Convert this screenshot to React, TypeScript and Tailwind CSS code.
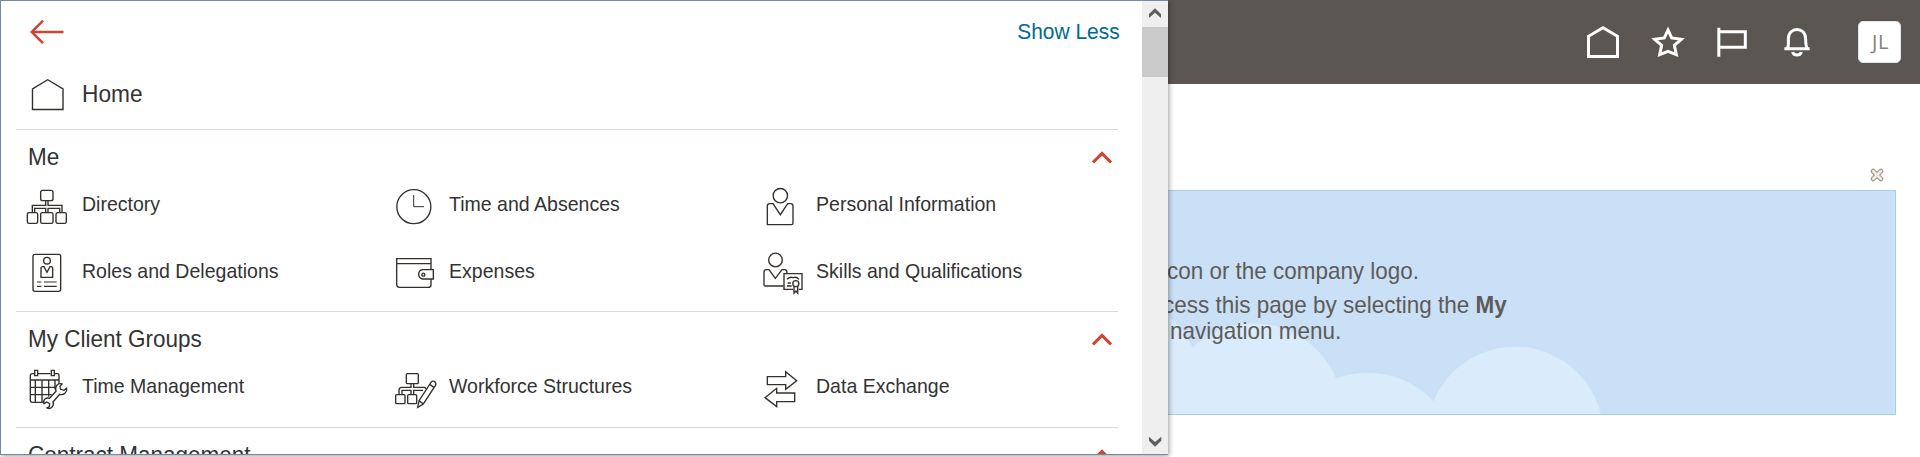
import type { ReactNode } from "react";

type IconProps = { x: number; y: number; tx: number; ty: number; children: ReactNode };

function MenuIcon({ x, y, tx, ty, children }: IconProps) {
  return (
    <svg
      className="h-[52px] w-[52px] shrink-0"
      viewBox={`${x} ${y} 52 52`}
      fill="none"
      stroke="#35302c"
    >
      <g transform={`translate(${tx} ${ty}) scale(0.33333)`} strokeWidth="4.1">
        {children}
      </g>
    </svg>
  );
}

const DirectoryIcon = () => (
  <MenuIcon x={20} y={178} tx={0} ty={0}>
    <rect x="122" y="571" width="37" height="31" rx="6" />
    <rect x="82" y="638" width="31" height="32" rx="5" />
    <rect x="122" y="638" width="37" height="32" rx="5" />
    <rect x="168" y="638" width="31" height="32" rx="5" />
    <path d="M137 602V616H97V638M144 602V616H186V638M104 638V625H137V638M144 638V625H179V638" />
  </MenuIcon>
);

const RolesIcon = () => (
  <MenuIcon x={20} y={245} tx={0} ty={230}>
    <rect x="99" y="73" width="83" height="111" rx="6" />
    <circle cx="141" cy="92" r="10" />
    <path d="M123 142V116Q123 110 129 110H132L141 127L150 110H153Q158 110 158 116V142Z" />
    <path d="M111 156H124M132 156H170M111 169H124M132 169H170" strokeWidth="3.5" />
  </MenuIcon>
);

const ClockIcon = () => (
  <MenuIcon x={387} y={178} tx={380} ty={170}>
    <circle cx="101.500" cy="110" r="51" />
    <path d="M101 75V110H132" strokeWidth="3" />
  </MenuIcon>
);

const WalletIcon = () => (
  <MenuIcon x={387} y={245} tx={380} ty={170}>
    <path d="M153 299V266H50V343Q50 352 59 352H145Q153 352 153 344V327M50 281H153" />
    <path d="M160 299H128Q116 301 116 313Q116 325 128 327H160Z" />
    <circle cx="130" cy="314" r="4.500" />
  </MenuIcon>
);

const PersonIcon = () => (
  <MenuIcon x={754} y={178} tx={740} ty={170}>
    <circle cx="121" cy="77" r="21.500" />
    <path d="M82 164V108Q82 101 89 101H99L121 134L143 101H152Q159 101 159 108V159Q159 164 154 164Z" />
  </MenuIcon>
);

const SkillsIcon = () => (
  <MenuIcon x={754} y={245} tx={740} ty={170}>
    <circle cx="106.500" cy="270" r="20.500" />
    <path d="M131 348H76Q72 348 72 344V306Q72 299 79 299H87L106 325L126 299H135Q141 299 141 310" />
    <path d="M159 358H132V311H186V358H176" />
    <path d="M141 328Q150 319 160 323Q169 319 177 328M143 339H153M141 348H155" />
    <circle cx="167.500" cy="341" r="9" fill="white" />
    <path d="M162 350V369L168 363L173 369V350" />
  </MenuIcon>
);

const CalendarIcon = () => (
  <MenuIcon x={20} y={360} tx={0} ty={230}>
    <path d="M103 431H97Q91 431 91 437V511Q91 517 97 517H140M114 431H152M165 431H172Q177 431 177 437V462M91 450H177" />
    <path d="M106 450V517M126 450V517M146 450V500M165 450V478M91 472H168M91 494H155" />
    <path d="M104 421H113V437H104ZM154 421H163V437H154Z" />
    <path
      d="M186 462C174 458 163 469 168 484L149 505C137 501 128 510 132 521L140 516L149 521L148 530L141 534C152 539 163 530 159 516L179 493C191 497 202 487 200 475L192 481L182 478L180 469Z"
      fill="white"
    />
  </MenuIcon>
);

const WorkforceIcon = () => (
  <MenuIcon x={387} y={360} tx={380} ty={170}>
    <rect x="79" y="611" width="36" height="30" rx="3" />
    <rect x="47" y="674" width="28" height="27" rx="3" />
    <rect x="83" y="674" width="27" height="27" rx="3" />
    <path d="M93 641V652H66Q57 652 57 661V674M101 641V652H134L139 657M66 674V661H93V674M101 674V661H129" />
    <path d="M113 712L117 692L153 637Q158 631 164 635Q170 640 166 647L130 702ZM117 692L130 702M149 643L162 652" fill="white" />
  </MenuIcon>
);

const ExchangeIcon = () => (
  <MenuIcon x={754} y={360} tx={740} ty={170}>
    <path d="M82 620H137V605L170 632L137 658V644H82Z" />
    <path d="M164 669H110V655L75 683L110 710V695H164Z" />
  </MenuIcon>
);

function MenuItem({ icon, label }: { icon: ReactNode; label: string }) {
  return (
    <a className="flex h-10 items-center">
      {icon}
      <span className="ml-[10px] origin-left scale-x-[0.93] whitespace-nowrap text-[21px] leading-10">
        {label}
      </span>
    </a>
  );
}

function Section({ title, children }: { title: string; children?: ReactNode }) {
  return (
    <section className="ml-[15px] w-[1102px] border-t border-[#d3dde4]">
      <div className="flex h-[54px] items-center justify-between pr-[6px] pl-3">
        <h2 className="origin-left scale-x-[0.937] text-[24px] leading-[54px] whitespace-nowrap">
          {title}
        </h2>
        <svg className="h-4 w-5" viewBox="0 0 20 16" fill="none" stroke="#cf4332" strokeWidth="3.100">
          <path d="M1 13.400L10 4.500L19 13.400" />
        </svg>
      </div>
      <div className="ml-1 grid grid-cols-[367px_367px_360px] gap-y-[27px]">{children}</div>
    </section>
  );
}

function Header() {
  return (
    <header className="flex h-[84px] items-center justify-end bg-[#5b5652] pr-[19px]">
      <svg className="mr-7 h-[84px] w-[260px]" viewBox="1570 0 260 84" fill="none" stroke="white">
        <g transform="translate(1560 0) scale(0.33333)" strokeWidth="9">
          <path d="M85.500 169.500V109L129 83L172.500 109V169.500Z" />
          <path d="M324 90L335 114L364 118L343 136L349 164L324 154L299 164L305 136L284 118L313 114Z" />
          <path d="M476.500 83V170M476 95H556V142H476" />
          <path d="M673 146H749M682 146C687 138 685 130 685 116C685 79 737 79 737 116C737 130 737 138 742 146" />
          <path d="M698 156Q700 165 711 165Q722 165 724 156" />
        </g>
      </svg>
      <div className="flex h-[42px] w-[43px] items-center justify-center rounded-[5px] border border-[#dfe6ee] bg-white pl-0.5 font-['Open_Sans',sans-serif] text-[20px] tracking-[0.600px] text-[#808080]">
        JL
      </div>
    </header>
  );
}

function Banner() {
  return (
    <main className="flex flex-col items-end pr-6 pl-[1130px] pt-[84px]">
      <svg className="mr-[12px] h-[14px] w-[14px]" viewBox="0 0 14 14" fill="none" strokeLinecap="round">
        <path d="M3.200 3.200L10.800 10.800M10.800 3.200L3.200 10.800" stroke="#9b9892" strokeWidth="5" />
        <path d="M3.200 3.200L10.800 10.800M10.800 3.200L3.200 10.800" stroke="#efebdf" strokeWidth="2.800" />
      </svg>
      <div className="relative mt-2 h-[225px] w-full overflow-hidden border border-[#a6cfea] bg-[#cae0f6] pt-[67px] text-[24px] leading-[26px] text-[#5c5b59]">
        <svg className="absolute top-0 left-0 h-[223px] w-[764px]" viewBox="1131 191 764 223" fill="#daebfb">
          <g transform="translate(1140 230) scale(0.33333)">
            <circle cx="-88" cy="463" r="269" />
            <circle cx="340" cy="549" r="269" />
            <circle cx="683" cy="698" r="270" />
            <circle cx="1125" cy="615" r="265" />
          </g>
        </svg>
        <p className="relative ml-[35.500px] origin-left scale-x-[0.935] whitespace-nowrap">con or the company logo.</p>
        <p className="relative mt-2 ml-[31.500px] origin-left scale-x-[0.937] whitespace-nowrap">
          cess this page by selecting the <b>My</b>
        </p>
        <p className="relative ml-[39px] origin-left scale-x-[0.937] whitespace-nowrap">navigation menu.</p>
      </div>
    </main>
  );
}

function Scrollbar() {
  return (
    <div className="flex h-[453px] w-[26px] shrink-0 flex-col items-center bg-[#efefef]">
      <svg className="h-[26px] w-[26px]" viewBox="1142 1 26 26" fill="#5f5f5f">
        <path transform="translate(980 0) scale(0.33333)" d="M507 42L525 25L543 42V54L525 38L507 54Z" />
      </svg>
      <div className="h-[50px] w-full bg-[#cbcbcb]" />
      <svg className="mt-auto h-[26px] w-[26px]" viewBox="1142 428 26 26" fill="#5f5f5f">
        <path transform="translate(1100 420) scale(0.33333)" d="M147 50L165 66L184 50V62L165 80L147 62Z" />
      </svg>
    </div>
  );
}

export default function App() {
  return (
    <div className="relative h-[457px] w-full overflow-hidden bg-white font-['Liberation_Sans',Arial,sans-serif] text-[#333]">
      <Header />
      <Banner />
      <nav className="absolute top-0 left-0 flex h-[455px] w-[1168px] overflow-hidden border-y border-l border-[#6f8ba5] bg-white shadow-[1px_1px_5px_rgba(0,0,0,0.4)]">
        <div className="h-[453px] grow overflow-hidden">
          <div className="flex h-[62px] items-center justify-between pr-[22px] pl-[29px]">
            <svg className="h-6 w-[34px]" viewBox="30 20 34 24" fill="none" stroke="#cf4332">
              <path d="M63.500 32H31.500M43 20.700L31.700 32L43 43.200" strokeWidth="2.500" />
            </svg>
            <a className="-mt-0.5 origin-right scale-x-[0.952] text-[22px] text-[#006b8f]">Show Less</a>
          </div>
          <div className="flex h-[66px] items-center pb-1">
            <svg className="ml-[30px] h-9 w-9" viewBox="31 76 36 36" fill="none" stroke="#35302c">
              <path d="M32.500 109.500V89L47.700 79.700L63 89V109.500Z" strokeWidth="1.400" />
            </svg>
            <span className="ml-[15px] origin-left scale-x-[0.945] text-[24px]">Home</span>
          </div>
          <Section title="Me">
            <MenuItem icon={<DirectoryIcon />} label="Directory" />
            <MenuItem icon={<ClockIcon />} label="Time and Absences" />
            <MenuItem icon={<PersonIcon />} label="Personal Information" />
            <MenuItem icon={<RolesIcon />} label="Roles and Delegations" />
            <MenuItem icon={<WalletIcon />} label="Expenses" />
            <MenuItem icon={<SkillsIcon />} label="Skills and Qualifications" />
          </Section>
          <div className="h-5" />
          <Section title="My Client Groups">
            <MenuItem icon={<CalendarIcon />} label="Time Management" />
            <MenuItem icon={<WorkforceIcon />} label="Workforce Structures" />
            <MenuItem icon={<ExchangeIcon />} label="Data Exchange" />
          </Section>
          <div className="h-[21px]" />
          <Section title="Contract Management" />
        </div>
        <Scrollbar />
      </nav>
    </div>
  );
}
